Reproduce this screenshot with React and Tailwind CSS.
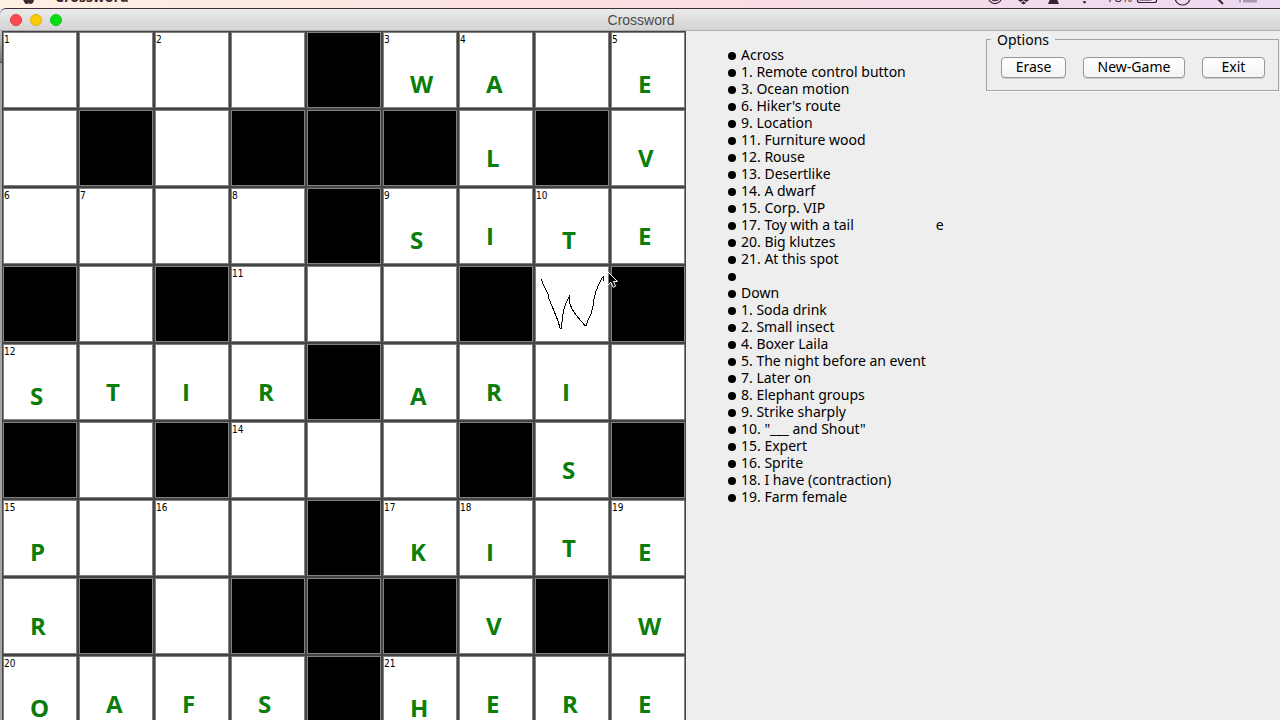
import React from "react";
import { FaApple } from "react-icons/fa";

const BLOCK = "#";

// One entry per cell: "#" is a block, "~" the cell being drawn in,
// otherwise "number:letter" with either part optional.
const rows = [
  ["1:", "", "2:", "", "#", "3:W", "4:A", "", "5:E"],
  ["", "#", "", "#", "#", "#", ":L", "#", ":V"],
  ["6:", "7:", "", "8:", "#", "9:S", ":I", "10:T", ":E"],
  ["#", "", "#", "11:", "", "", "#", "~", "#"],
  ["12:S", ":T", ":I", ":R", "#", " :A", ":R", ":I", ""],
  ["#", "", "#", "14:", "", "", "#", ":S", "#"],
  ["15:P", "", "16:", "", "#", "17:K", "18:I", ":T", "19:E"],
  [":R", "#", "", "#", "#", "#", ":V", "#", ":W"],
  ["20:O", ":A", ":F", ":S", "#", "21:H", ":E", ":R", ":E"],
];

const clues = [
  "Across",
  "1. Remote control button",
  "3. Ocean motion",
  "6. Hiker's route",
  "9. Location",
  "11. Furniture wood",
  "12. Rouse",
  "13. Desertlike",
  "14. A dwarf",
  "15. Corp. VIP",
  "17. Toy with a tail",
  "20. Big klutzes",
  "21. At this spot",
  "",
  "Down",
  "1. Soda drink",
  "2. Small insect",
  "4. Boxer Laila",
  "5. The night before an event",
  "7. Later on",
  "8. Elephant groups",
  "9. Strike sharply",
  '10. "___ and Shout"',
  "15. Expert",
  "16. Sprite",
  "18. I have (contraction)",
  "19. Farm female",
];

function Stroke() {
  return (
    <svg className="col-start-1 row-start-1 h-[74px] w-[72px]" viewBox="2 2 72 74" fill="none" stroke="#000" strokeWidth="1" shapeRendering="crispEdges">
      <path d="M7.5 14 L9 19 L12 25 L14.5 30 L15 34 L18 41 L22 51 L24 56 L26 63 L27.5 63 L28.5 52 L30 44 L32 38 L35.5 31.5 L36 39 L38 44 L42 50 L47 56 L51 60.5 L52.5 60 L54 55 L57 49 L59 41 L60 34 L62 26 L65 19 L68 13 L69.5 11.5 L69 16" />
    </svg>
  );
}

function Pointer() {
  return (
    <svg className="pointer-events-none absolute left-[72px] top-[5px] z-10 h-[18px] w-3" viewBox="0 0 12 18">
      <path d="M1 1 V14 L4 11.3 L6.2 16.3 L8.6 15.2 L6.5 10.5 H10.5 Z" fill="#000" stroke="#fff" strokeWidth="1" />
    </svg>
  );
}

function Cell({ value }) {
  if (value === BLOCK) {
    return (
      <div className="border border-[#444]">
        <div className="h-full border border-[#808080] bg-black" />
      </div>
    );
  }
  const [number = "", letter = ""] = value === "~" ? [] : value.split(":");
  return (
    <div className="relative border border-[#444]">
      <div className="grid h-full items-start justify-items-start border border-[#808080] bg-white">
        <span className="col-start-1 row-start-1 font-['DejaVu_Sans_Condensed','DejaVu_Sans',sans-serif] text-[10px] leading-[14px]">
          {number}
        </span>
        {letter && (
          <span
            className={
              "col-start-1 row-start-1 pl-[26px] font-['Open_Sans',sans-serif] text-2xl leading-6 font-bold text-[#0a7d0a] " +
              (number ? "mt-[39px]" : "mt-[35px]")
            }
          >
            {letter}
          </span>
        )}
        {value === "~" && <Stroke />}
      </div>
      {value === "~" && <Pointer />}
    </div>
  );
}

function MenuBar() {
  return (
    <header className="flex h-2 shrink-0 items-end overflow-hidden bg-linear-to-r from-[#fdf0e4] via-[#fcdfe2] to-[#ecd9f2] text-[#3d2a2c]">
      <div className="flex h-[22px] w-full shrink-0 items-center">
        <FaApple className="ml-[21px] size-[15px]" />
        <span className="ml-[19px] font-['Open_Sans',sans-serif] text-sm leading-5 font-bold">Crossword</span>
        <svg className="ml-auto mr-[22px] h-[22px] w-[270px] shrink-0" viewBox="0 0 270 22" fill="none" stroke="#3a2336" strokeWidth="1.2">
          <circle cx="7" cy="11" r="6.6" />
          <path d="M3.500 13.500 q3.500 2.500 7 0" />
          <path d="M30 5 L35.500 9 L41 5 V14 L38.500 16 L35.500 14.300 L32.500 16 L30 14 Z M33 17 L35.500 15.300 L38 17 L35.500 18.500 Z" fill="#3a2336" stroke="none" />
          <path d="M65.500 5 L60 18 H71 Z" fill="#3a2336" stroke="none" />
          <path d="M94.500 15.500 L96.500 17.800 L98.500 15.500 Q96.500 14.500 94.500 15.500Z" fill="#3a2336" stroke="none" />
          <path d="M91.500 13.800 Q96.500 9.500 101.500 13.800" />
          <rect x="149.500" y="5" width="19" height="11.500" rx="2" />
          <rect x="151.500" y="7" width="12" height="7.500" fill="#3a2336" stroke="none" />
          <circle cx="194.500" cy="11.500" r="7.500" />
          <circle cx="226" cy="9" r="4.500" />
          <path d="M229 12 L235 18" strokeWidth="2" />
          <path d="M251 15 h2 M255 15 h14" stroke="#a898ae" strokeWidth="3" />
          <text x="119" y="16" fontSize="13" fontFamily="Open Sans, sans-serif" fill="#3a2336" stroke="none">78%</text>
        </svg>
      </div>
    </header>
  );
}

function PushButton({ children, className }) {
  return (
    <button
      type="button"
      className={"h-[21px] rounded-sm border border-[#979797] bg-linear-to-b from-white to-[#f4f4f4] pb-0.5 leading-[17px] shadow-[0_1px_0_#ccc] " + className}
    >
      {children}
    </button>
  );
}

export default function App() {
  return (
    <div className="flex h-screen flex-col overflow-hidden bg-[#eeeeee] font-['Noto_Sans',sans-serif] text-sm text-black">
      <MenuBar />
      <div className="grid h-[23px] shrink-0 grid-cols-[1fr_auto_1fr] items-center rounded-tl-md border-t border-b border-t-[#3c2c33] border-b-[#adadad] bg-linear-to-b from-[#ebebeb] to-[#d3d3d3]">
        <div className="flex gap-2 pl-2.5">
          <button type="button" aria-label="Close" className="size-3 rounded-full border border-[#e2383f] bg-[#ff4a50]" />
          <button type="button" aria-label="Minimize" className="size-3 rounded-full border border-[#e0b000] bg-[#fdcb05]" />
          <button type="button" aria-label="Zoom" className="size-3 rounded-full border border-[#10c41a] bg-[#05df12]" />
        </div>
        <h1 className="pl-0.5 font-['Liberation_Sans',Arial,sans-serif] text-sm leading-5 text-[#4a4a4a]">Crossword</h1>
      </div>
      <main className="flex min-h-0 flex-1 items-start">
        <div className="flex w-0.5 shrink-0 flex-col self-stretch">
          <div className="h-8 border-b border-[#444] bg-linear-to-b from-[#c4c4c4] to-[#777]" />
          <div className="flex-1 bg-[#a6a6a6]" />
        </div>
        <div className="grid shrink-0 auto-rows-[78px] grid-cols-[repeat(9,76px)]">
          {rows.flatMap((row, r) => row.map((value, c) => <Cell key={r + "-" + c} value={value} />))}
        </div>
        <ul className="w-[300px] shrink-0 pt-[15px] pl-[42px] leading-[17px]">
          {clues.map((clue, i) => (
            <li key={i} className="flex h-[17px] items-center gap-[5px]">
              <span className="mt-0.5 size-2 shrink-0 rounded-full bg-black" />
              {clue}
              {clue.startsWith("17.") && <span className="ml-[77px]">e</span>}
            </li>
          ))}
        </ul>
        <fieldset className="mr-px min-w-0 flex-1 border border-[#a3a3a3] pt-[9px] pr-2 pb-3 pl-3.5 shadow-[0_1px_0_#fafafa]">
          <legend className="-ml-2.5 px-1.5 leading-[17px]">Options</legend>
          <div className="flex gap-[17px]">
            <PushButton className="w-[65px]">Erase</PushButton>
            <PushButton className="w-[102px]">New-Game</PushButton>
            <PushButton className="w-[63px]">Exit</PushButton>
          </div>
        </fieldset>
      </main>
    </div>
  );
}
